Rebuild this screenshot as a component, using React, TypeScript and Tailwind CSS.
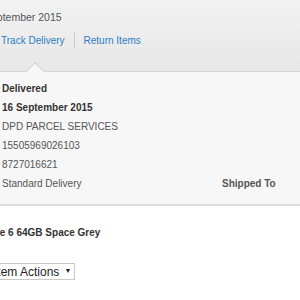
export default function App() {
    return (
        <div className="w-[300px] h-[300px] overflow-hidden bg-white font-['Liberation_Sans',Arial,sans-serif]">

            <div className="relative h-[72px] bg-gradient-to-b from-[#f2f2f2] to-[#e7e7e7] border-b border-[#d3d3d3] pt-[11px]">
                <p className="-ml-[16px] text-[10.5px] leading-[13px] text-[#555555] whitespace-nowrap">
                    September 2015
                </p>
                <div className="mt-[8px] flex items-center h-[17px] pl-[1px] text-[10px] text-[#2a7fc4]">
                    <span>Track Delivery</span>
                    <span className="mx-[9px] w-px h-[17px] bg-[#cfcfcf]" />
                    <span>Return Items</span>
                </div>
                <span className="absolute left-[28px] top-[65px] w-[14px] h-[14px] rotate-45 bg-[#f7f7f7] border-l border-t border-[#d3d3d3]" />
            </div>

            <div className="bg-[#f7f7f7] h-[134px] pt-[7px] pl-[2px] border-b-2 border-[#dcdcdc] text-[10px] leading-[19px] text-[#555555]">
                <p className="font-bold text-[#333333]">Delivered</p>
                <p className="font-bold text-[#333333]">16 September 2015</p>
                <p>DPD PARCEL SERVICES</p>
                <p>15505969026103</p>
                <p>8727016621</p>
                <div className="flex">
                    <span className="w-[220px]">Standard Delivery</span>
                    <span className="font-bold">Shipped To</span>
                </div>
            </div>

            <div className="pt-[20px]">
                <p className="-ml-[28px] text-[10px] leading-[13px] font-bold text-[#333333] whitespace-nowrap">
                    iPhone 6 64GB Space Grey
                </p>
                <div className="mt-[24px] -ml-[10px] inline-flex items-center h-[17px] w-[85px] pl-[3px] border border-[#c8c8c8] bg-white text-[12px] text-[#222222] whitespace-nowrap">
                    <span>Item Actions</span>
                    <span className="ml-[5px] text-[7px]">▼</span>
                </div>
            </div>

        </div>
    );
}
